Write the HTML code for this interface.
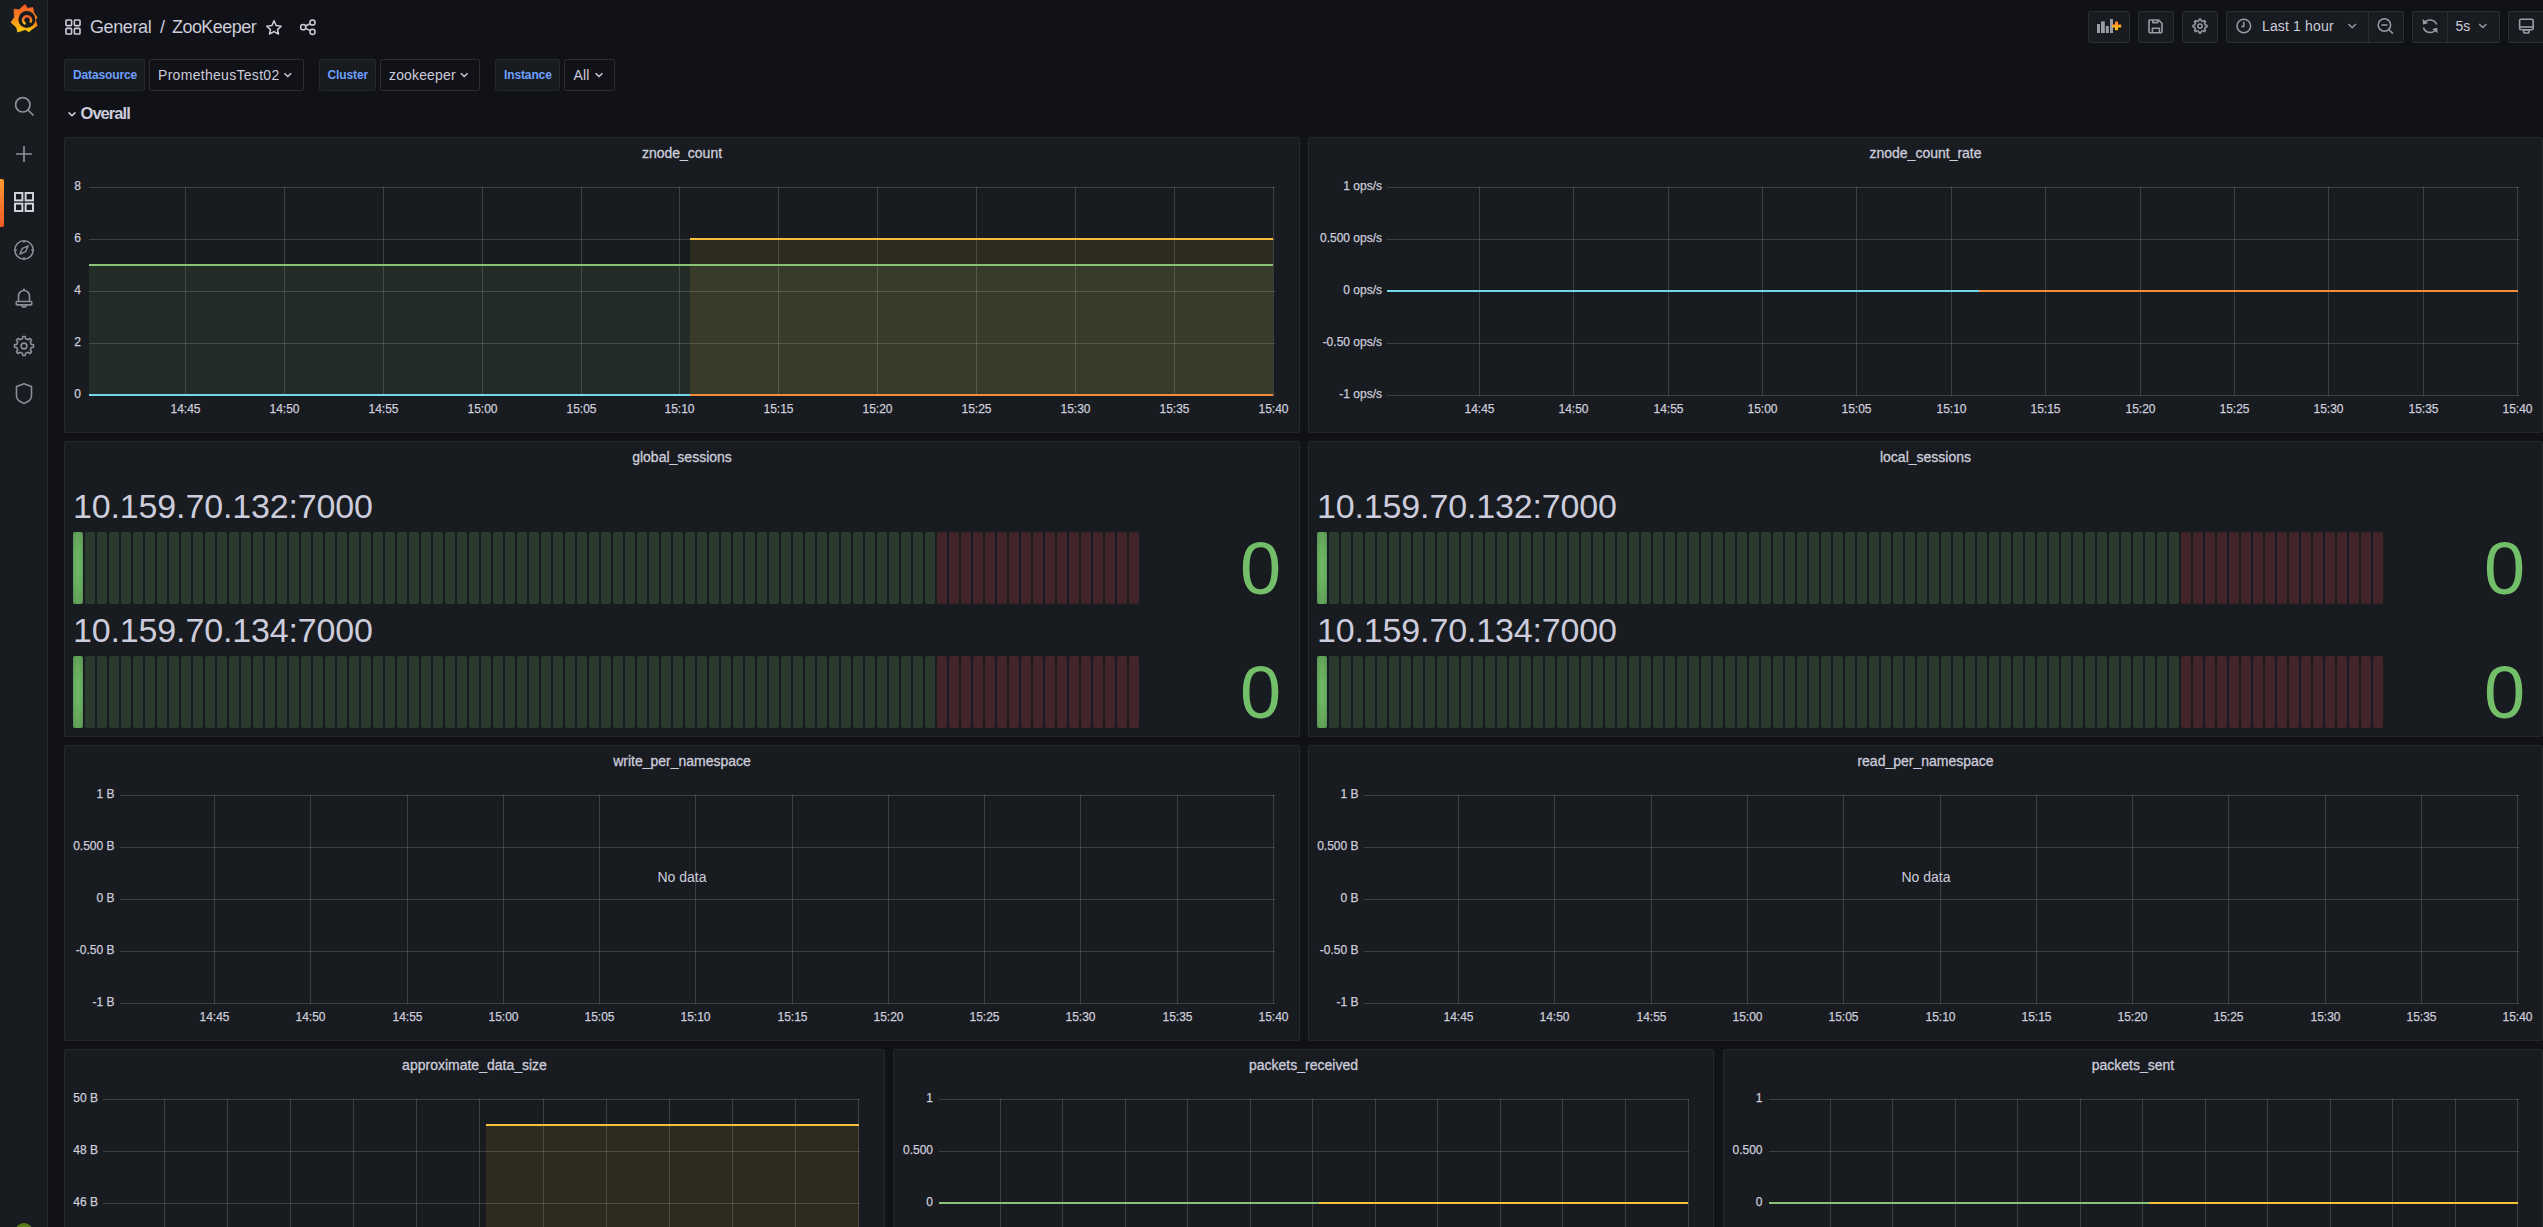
<!DOCTYPE html>
<html><head><meta charset="utf-8"><title>ZooKeeper - Grafana</title>
<style>
html,body{margin:0;padding:0;background:#111217;width:2543px;height:1227px;overflow:hidden;}
body{position:relative;font-family:"Liberation Sans", sans-serif;}
.t{position:absolute;white-space:nowrap;}
.b{position:absolute;box-sizing:border-box;}
.lit{background:radial-gradient(ellipse at center,#71bc68 0%,#66aa5e 55%,#5a9152 100%);border-radius:2px;}
svg.ov{position:absolute;left:0;top:0;}
</style></head><body>
<div class="b" style="left:0;top:0;width:48px;height:1227px;background:#181b1f;border-right:1px solid #25272c;"></div>
<div class="b" style="left:0;top:179px;width:4px;height:48px;background:linear-gradient(180deg,#ff9a2e 0%,#f05a28 100%);border-radius:0 2px 2px 0"></div>
<div class="b" style="left:64px;top:137px;width:1236px;height:296px;background:#181b1f;border:1px solid #25272c;border-radius:2px;"></div>
<div class="b" style="left:1308px;top:137px;width:1235px;height:296px;background:#181b1f;border:1px solid #25272c;border-radius:2px;"></div>
<div class="b" style="left:64px;top:441px;width:1236px;height:296px;background:#181b1f;border:1px solid #25272c;border-radius:2px;"></div>
<div class="b" style="left:1308px;top:441px;width:1235px;height:296px;background:#181b1f;border:1px solid #25272c;border-radius:2px;"></div>
<div class="b" style="left:64px;top:745px;width:1236px;height:296px;background:#181b1f;border:1px solid #25272c;border-radius:2px;"></div>
<div class="b" style="left:1308px;top:745px;width:1235px;height:296px;background:#181b1f;border:1px solid #25272c;border-radius:2px;"></div>
<div class="b" style="left:64px;top:1049px;width:821px;height:189px;background:#181b1f;border:1px solid #25272c;border-radius:2px;"></div>
<div class="b" style="left:893px;top:1049px;width:821px;height:189px;background:#181b1f;border:1px solid #25272c;border-radius:2px;"></div>
<div class="b" style="left:1723px;top:1049px;width:820px;height:189px;background:#181b1f;border:1px solid #25272c;border-radius:2px;"></div>
<div class="b lit" style="left:73px;top:532px;width:10px;height:72px"></div>
<div class="b" style="left:85px;top:532px;width:10px;height:72px;background:#293b2d;border-radius:2px"></div>
<div class="b" style="left:97px;top:532px;width:10px;height:72px;background:#293b2d;border-radius:2px"></div>
<div class="b" style="left:109px;top:532px;width:10px;height:72px;background:#293b2d;border-radius:2px"></div>
<div class="b" style="left:121px;top:532px;width:10px;height:72px;background:#293b2d;border-radius:2px"></div>
<div class="b" style="left:133px;top:532px;width:10px;height:72px;background:#293b2d;border-radius:2px"></div>
<div class="b" style="left:145px;top:532px;width:10px;height:72px;background:#293b2d;border-radius:2px"></div>
<div class="b" style="left:157px;top:532px;width:10px;height:72px;background:#293b2d;border-radius:2px"></div>
<div class="b" style="left:169px;top:532px;width:10px;height:72px;background:#293b2d;border-radius:2px"></div>
<div class="b" style="left:181px;top:532px;width:10px;height:72px;background:#293b2d;border-radius:2px"></div>
<div class="b" style="left:193px;top:532px;width:10px;height:72px;background:#293b2d;border-radius:2px"></div>
<div class="b" style="left:205px;top:532px;width:10px;height:72px;background:#293b2d;border-radius:2px"></div>
<div class="b" style="left:217px;top:532px;width:10px;height:72px;background:#293b2d;border-radius:2px"></div>
<div class="b" style="left:229px;top:532px;width:10px;height:72px;background:#293b2d;border-radius:2px"></div>
<div class="b" style="left:241px;top:532px;width:10px;height:72px;background:#293b2d;border-radius:2px"></div>
<div class="b" style="left:253px;top:532px;width:10px;height:72px;background:#293b2d;border-radius:2px"></div>
<div class="b" style="left:265px;top:532px;width:10px;height:72px;background:#293b2d;border-radius:2px"></div>
<div class="b" style="left:277px;top:532px;width:10px;height:72px;background:#293b2d;border-radius:2px"></div>
<div class="b" style="left:289px;top:532px;width:10px;height:72px;background:#293b2d;border-radius:2px"></div>
<div class="b" style="left:301px;top:532px;width:10px;height:72px;background:#293b2d;border-radius:2px"></div>
<div class="b" style="left:313px;top:532px;width:10px;height:72px;background:#293b2d;border-radius:2px"></div>
<div class="b" style="left:325px;top:532px;width:10px;height:72px;background:#293b2d;border-radius:2px"></div>
<div class="b" style="left:337px;top:532px;width:10px;height:72px;background:#293b2d;border-radius:2px"></div>
<div class="b" style="left:349px;top:532px;width:10px;height:72px;background:#293b2d;border-radius:2px"></div>
<div class="b" style="left:361px;top:532px;width:10px;height:72px;background:#293b2d;border-radius:2px"></div>
<div class="b" style="left:373px;top:532px;width:10px;height:72px;background:#293b2d;border-radius:2px"></div>
<div class="b" style="left:385px;top:532px;width:10px;height:72px;background:#293b2d;border-radius:2px"></div>
<div class="b" style="left:397px;top:532px;width:10px;height:72px;background:#293b2d;border-radius:2px"></div>
<div class="b" style="left:409px;top:532px;width:10px;height:72px;background:#293b2d;border-radius:2px"></div>
<div class="b" style="left:421px;top:532px;width:10px;height:72px;background:#293b2d;border-radius:2px"></div>
<div class="b" style="left:433px;top:532px;width:10px;height:72px;background:#293b2d;border-radius:2px"></div>
<div class="b" style="left:445px;top:532px;width:10px;height:72px;background:#293b2d;border-radius:2px"></div>
<div class="b" style="left:457px;top:532px;width:10px;height:72px;background:#293b2d;border-radius:2px"></div>
<div class="b" style="left:469px;top:532px;width:10px;height:72px;background:#293b2d;border-radius:2px"></div>
<div class="b" style="left:481px;top:532px;width:10px;height:72px;background:#293b2d;border-radius:2px"></div>
<div class="b" style="left:493px;top:532px;width:10px;height:72px;background:#293b2d;border-radius:2px"></div>
<div class="b" style="left:505px;top:532px;width:10px;height:72px;background:#293b2d;border-radius:2px"></div>
<div class="b" style="left:517px;top:532px;width:10px;height:72px;background:#293b2d;border-radius:2px"></div>
<div class="b" style="left:529px;top:532px;width:10px;height:72px;background:#293b2d;border-radius:2px"></div>
<div class="b" style="left:541px;top:532px;width:10px;height:72px;background:#293b2d;border-radius:2px"></div>
<div class="b" style="left:553px;top:532px;width:10px;height:72px;background:#293b2d;border-radius:2px"></div>
<div class="b" style="left:565px;top:532px;width:10px;height:72px;background:#293b2d;border-radius:2px"></div>
<div class="b" style="left:577px;top:532px;width:10px;height:72px;background:#293b2d;border-radius:2px"></div>
<div class="b" style="left:589px;top:532px;width:10px;height:72px;background:#293b2d;border-radius:2px"></div>
<div class="b" style="left:601px;top:532px;width:10px;height:72px;background:#293b2d;border-radius:2px"></div>
<div class="b" style="left:613px;top:532px;width:10px;height:72px;background:#293b2d;border-radius:2px"></div>
<div class="b" style="left:625px;top:532px;width:10px;height:72px;background:#293b2d;border-radius:2px"></div>
<div class="b" style="left:637px;top:532px;width:10px;height:72px;background:#293b2d;border-radius:2px"></div>
<div class="b" style="left:649px;top:532px;width:10px;height:72px;background:#293b2d;border-radius:2px"></div>
<div class="b" style="left:661px;top:532px;width:10px;height:72px;background:#293b2d;border-radius:2px"></div>
<div class="b" style="left:673px;top:532px;width:10px;height:72px;background:#293b2d;border-radius:2px"></div>
<div class="b" style="left:685px;top:532px;width:10px;height:72px;background:#293b2d;border-radius:2px"></div>
<div class="b" style="left:697px;top:532px;width:10px;height:72px;background:#293b2d;border-radius:2px"></div>
<div class="b" style="left:709px;top:532px;width:10px;height:72px;background:#293b2d;border-radius:2px"></div>
<div class="b" style="left:721px;top:532px;width:10px;height:72px;background:#293b2d;border-radius:2px"></div>
<div class="b" style="left:733px;top:532px;width:10px;height:72px;background:#293b2d;border-radius:2px"></div>
<div class="b" style="left:745px;top:532px;width:10px;height:72px;background:#293b2d;border-radius:2px"></div>
<div class="b" style="left:757px;top:532px;width:10px;height:72px;background:#293b2d;border-radius:2px"></div>
<div class="b" style="left:769px;top:532px;width:10px;height:72px;background:#293b2d;border-radius:2px"></div>
<div class="b" style="left:781px;top:532px;width:10px;height:72px;background:#293b2d;border-radius:2px"></div>
<div class="b" style="left:793px;top:532px;width:10px;height:72px;background:#293b2d;border-radius:2px"></div>
<div class="b" style="left:805px;top:532px;width:10px;height:72px;background:#293b2d;border-radius:2px"></div>
<div class="b" style="left:817px;top:532px;width:10px;height:72px;background:#293b2d;border-radius:2px"></div>
<div class="b" style="left:829px;top:532px;width:10px;height:72px;background:#293b2d;border-radius:2px"></div>
<div class="b" style="left:841px;top:532px;width:10px;height:72px;background:#293b2d;border-radius:2px"></div>
<div class="b" style="left:853px;top:532px;width:10px;height:72px;background:#293b2d;border-radius:2px"></div>
<div class="b" style="left:865px;top:532px;width:10px;height:72px;background:#293b2d;border-radius:2px"></div>
<div class="b" style="left:877px;top:532px;width:10px;height:72px;background:#293b2d;border-radius:2px"></div>
<div class="b" style="left:889px;top:532px;width:10px;height:72px;background:#293b2d;border-radius:2px"></div>
<div class="b" style="left:901px;top:532px;width:10px;height:72px;background:#293b2d;border-radius:2px"></div>
<div class="b" style="left:913px;top:532px;width:10px;height:72px;background:#293b2d;border-radius:2px"></div>
<div class="b" style="left:925px;top:532px;width:10px;height:72px;background:#293b2d;border-radius:2px"></div>
<div class="b" style="left:937px;top:532px;width:10px;height:72px;background:#44242b;border-radius:2px"></div>
<div class="b" style="left:949px;top:532px;width:10px;height:72px;background:#44242b;border-radius:2px"></div>
<div class="b" style="left:961px;top:532px;width:10px;height:72px;background:#44242b;border-radius:2px"></div>
<div class="b" style="left:973px;top:532px;width:10px;height:72px;background:#44242b;border-radius:2px"></div>
<div class="b" style="left:985px;top:532px;width:10px;height:72px;background:#44242b;border-radius:2px"></div>
<div class="b" style="left:997px;top:532px;width:10px;height:72px;background:#44242b;border-radius:2px"></div>
<div class="b" style="left:1009px;top:532px;width:10px;height:72px;background:#44242b;border-radius:2px"></div>
<div class="b" style="left:1021px;top:532px;width:10px;height:72px;background:#44242b;border-radius:2px"></div>
<div class="b" style="left:1033px;top:532px;width:10px;height:72px;background:#44242b;border-radius:2px"></div>
<div class="b" style="left:1045px;top:532px;width:10px;height:72px;background:#44242b;border-radius:2px"></div>
<div class="b" style="left:1057px;top:532px;width:10px;height:72px;background:#44242b;border-radius:2px"></div>
<div class="b" style="left:1069px;top:532px;width:10px;height:72px;background:#44242b;border-radius:2px"></div>
<div class="b" style="left:1081px;top:532px;width:10px;height:72px;background:#44242b;border-radius:2px"></div>
<div class="b" style="left:1093px;top:532px;width:10px;height:72px;background:#44242b;border-radius:2px"></div>
<div class="b" style="left:1105px;top:532px;width:10px;height:72px;background:#44242b;border-radius:2px"></div>
<div class="b" style="left:1117px;top:532px;width:10px;height:72px;background:#44242b;border-radius:2px"></div>
<div class="b" style="left:1129px;top:532px;width:10px;height:72px;background:#44242b;border-radius:2px"></div>
<div class="b lit" style="left:73px;top:656px;width:10px;height:72px"></div>
<div class="b" style="left:85px;top:656px;width:10px;height:72px;background:#293b2d;border-radius:2px"></div>
<div class="b" style="left:97px;top:656px;width:10px;height:72px;background:#293b2d;border-radius:2px"></div>
<div class="b" style="left:109px;top:656px;width:10px;height:72px;background:#293b2d;border-radius:2px"></div>
<div class="b" style="left:121px;top:656px;width:10px;height:72px;background:#293b2d;border-radius:2px"></div>
<div class="b" style="left:133px;top:656px;width:10px;height:72px;background:#293b2d;border-radius:2px"></div>
<div class="b" style="left:145px;top:656px;width:10px;height:72px;background:#293b2d;border-radius:2px"></div>
<div class="b" style="left:157px;top:656px;width:10px;height:72px;background:#293b2d;border-radius:2px"></div>
<div class="b" style="left:169px;top:656px;width:10px;height:72px;background:#293b2d;border-radius:2px"></div>
<div class="b" style="left:181px;top:656px;width:10px;height:72px;background:#293b2d;border-radius:2px"></div>
<div class="b" style="left:193px;top:656px;width:10px;height:72px;background:#293b2d;border-radius:2px"></div>
<div class="b" style="left:205px;top:656px;width:10px;height:72px;background:#293b2d;border-radius:2px"></div>
<div class="b" style="left:217px;top:656px;width:10px;height:72px;background:#293b2d;border-radius:2px"></div>
<div class="b" style="left:229px;top:656px;width:10px;height:72px;background:#293b2d;border-radius:2px"></div>
<div class="b" style="left:241px;top:656px;width:10px;height:72px;background:#293b2d;border-radius:2px"></div>
<div class="b" style="left:253px;top:656px;width:10px;height:72px;background:#293b2d;border-radius:2px"></div>
<div class="b" style="left:265px;top:656px;width:10px;height:72px;background:#293b2d;border-radius:2px"></div>
<div class="b" style="left:277px;top:656px;width:10px;height:72px;background:#293b2d;border-radius:2px"></div>
<div class="b" style="left:289px;top:656px;width:10px;height:72px;background:#293b2d;border-radius:2px"></div>
<div class="b" style="left:301px;top:656px;width:10px;height:72px;background:#293b2d;border-radius:2px"></div>
<div class="b" style="left:313px;top:656px;width:10px;height:72px;background:#293b2d;border-radius:2px"></div>
<div class="b" style="left:325px;top:656px;width:10px;height:72px;background:#293b2d;border-radius:2px"></div>
<div class="b" style="left:337px;top:656px;width:10px;height:72px;background:#293b2d;border-radius:2px"></div>
<div class="b" style="left:349px;top:656px;width:10px;height:72px;background:#293b2d;border-radius:2px"></div>
<div class="b" style="left:361px;top:656px;width:10px;height:72px;background:#293b2d;border-radius:2px"></div>
<div class="b" style="left:373px;top:656px;width:10px;height:72px;background:#293b2d;border-radius:2px"></div>
<div class="b" style="left:385px;top:656px;width:10px;height:72px;background:#293b2d;border-radius:2px"></div>
<div class="b" style="left:397px;top:656px;width:10px;height:72px;background:#293b2d;border-radius:2px"></div>
<div class="b" style="left:409px;top:656px;width:10px;height:72px;background:#293b2d;border-radius:2px"></div>
<div class="b" style="left:421px;top:656px;width:10px;height:72px;background:#293b2d;border-radius:2px"></div>
<div class="b" style="left:433px;top:656px;width:10px;height:72px;background:#293b2d;border-radius:2px"></div>
<div class="b" style="left:445px;top:656px;width:10px;height:72px;background:#293b2d;border-radius:2px"></div>
<div class="b" style="left:457px;top:656px;width:10px;height:72px;background:#293b2d;border-radius:2px"></div>
<div class="b" style="left:469px;top:656px;width:10px;height:72px;background:#293b2d;border-radius:2px"></div>
<div class="b" style="left:481px;top:656px;width:10px;height:72px;background:#293b2d;border-radius:2px"></div>
<div class="b" style="left:493px;top:656px;width:10px;height:72px;background:#293b2d;border-radius:2px"></div>
<div class="b" style="left:505px;top:656px;width:10px;height:72px;background:#293b2d;border-radius:2px"></div>
<div class="b" style="left:517px;top:656px;width:10px;height:72px;background:#293b2d;border-radius:2px"></div>
<div class="b" style="left:529px;top:656px;width:10px;height:72px;background:#293b2d;border-radius:2px"></div>
<div class="b" style="left:541px;top:656px;width:10px;height:72px;background:#293b2d;border-radius:2px"></div>
<div class="b" style="left:553px;top:656px;width:10px;height:72px;background:#293b2d;border-radius:2px"></div>
<div class="b" style="left:565px;top:656px;width:10px;height:72px;background:#293b2d;border-radius:2px"></div>
<div class="b" style="left:577px;top:656px;width:10px;height:72px;background:#293b2d;border-radius:2px"></div>
<div class="b" style="left:589px;top:656px;width:10px;height:72px;background:#293b2d;border-radius:2px"></div>
<div class="b" style="left:601px;top:656px;width:10px;height:72px;background:#293b2d;border-radius:2px"></div>
<div class="b" style="left:613px;top:656px;width:10px;height:72px;background:#293b2d;border-radius:2px"></div>
<div class="b" style="left:625px;top:656px;width:10px;height:72px;background:#293b2d;border-radius:2px"></div>
<div class="b" style="left:637px;top:656px;width:10px;height:72px;background:#293b2d;border-radius:2px"></div>
<div class="b" style="left:649px;top:656px;width:10px;height:72px;background:#293b2d;border-radius:2px"></div>
<div class="b" style="left:661px;top:656px;width:10px;height:72px;background:#293b2d;border-radius:2px"></div>
<div class="b" style="left:673px;top:656px;width:10px;height:72px;background:#293b2d;border-radius:2px"></div>
<div class="b" style="left:685px;top:656px;width:10px;height:72px;background:#293b2d;border-radius:2px"></div>
<div class="b" style="left:697px;top:656px;width:10px;height:72px;background:#293b2d;border-radius:2px"></div>
<div class="b" style="left:709px;top:656px;width:10px;height:72px;background:#293b2d;border-radius:2px"></div>
<div class="b" style="left:721px;top:656px;width:10px;height:72px;background:#293b2d;border-radius:2px"></div>
<div class="b" style="left:733px;top:656px;width:10px;height:72px;background:#293b2d;border-radius:2px"></div>
<div class="b" style="left:745px;top:656px;width:10px;height:72px;background:#293b2d;border-radius:2px"></div>
<div class="b" style="left:757px;top:656px;width:10px;height:72px;background:#293b2d;border-radius:2px"></div>
<div class="b" style="left:769px;top:656px;width:10px;height:72px;background:#293b2d;border-radius:2px"></div>
<div class="b" style="left:781px;top:656px;width:10px;height:72px;background:#293b2d;border-radius:2px"></div>
<div class="b" style="left:793px;top:656px;width:10px;height:72px;background:#293b2d;border-radius:2px"></div>
<div class="b" style="left:805px;top:656px;width:10px;height:72px;background:#293b2d;border-radius:2px"></div>
<div class="b" style="left:817px;top:656px;width:10px;height:72px;background:#293b2d;border-radius:2px"></div>
<div class="b" style="left:829px;top:656px;width:10px;height:72px;background:#293b2d;border-radius:2px"></div>
<div class="b" style="left:841px;top:656px;width:10px;height:72px;background:#293b2d;border-radius:2px"></div>
<div class="b" style="left:853px;top:656px;width:10px;height:72px;background:#293b2d;border-radius:2px"></div>
<div class="b" style="left:865px;top:656px;width:10px;height:72px;background:#293b2d;border-radius:2px"></div>
<div class="b" style="left:877px;top:656px;width:10px;height:72px;background:#293b2d;border-radius:2px"></div>
<div class="b" style="left:889px;top:656px;width:10px;height:72px;background:#293b2d;border-radius:2px"></div>
<div class="b" style="left:901px;top:656px;width:10px;height:72px;background:#293b2d;border-radius:2px"></div>
<div class="b" style="left:913px;top:656px;width:10px;height:72px;background:#293b2d;border-radius:2px"></div>
<div class="b" style="left:925px;top:656px;width:10px;height:72px;background:#293b2d;border-radius:2px"></div>
<div class="b" style="left:937px;top:656px;width:10px;height:72px;background:#44242b;border-radius:2px"></div>
<div class="b" style="left:949px;top:656px;width:10px;height:72px;background:#44242b;border-radius:2px"></div>
<div class="b" style="left:961px;top:656px;width:10px;height:72px;background:#44242b;border-radius:2px"></div>
<div class="b" style="left:973px;top:656px;width:10px;height:72px;background:#44242b;border-radius:2px"></div>
<div class="b" style="left:985px;top:656px;width:10px;height:72px;background:#44242b;border-radius:2px"></div>
<div class="b" style="left:997px;top:656px;width:10px;height:72px;background:#44242b;border-radius:2px"></div>
<div class="b" style="left:1009px;top:656px;width:10px;height:72px;background:#44242b;border-radius:2px"></div>
<div class="b" style="left:1021px;top:656px;width:10px;height:72px;background:#44242b;border-radius:2px"></div>
<div class="b" style="left:1033px;top:656px;width:10px;height:72px;background:#44242b;border-radius:2px"></div>
<div class="b" style="left:1045px;top:656px;width:10px;height:72px;background:#44242b;border-radius:2px"></div>
<div class="b" style="left:1057px;top:656px;width:10px;height:72px;background:#44242b;border-radius:2px"></div>
<div class="b" style="left:1069px;top:656px;width:10px;height:72px;background:#44242b;border-radius:2px"></div>
<div class="b" style="left:1081px;top:656px;width:10px;height:72px;background:#44242b;border-radius:2px"></div>
<div class="b" style="left:1093px;top:656px;width:10px;height:72px;background:#44242b;border-radius:2px"></div>
<div class="b" style="left:1105px;top:656px;width:10px;height:72px;background:#44242b;border-radius:2px"></div>
<div class="b" style="left:1117px;top:656px;width:10px;height:72px;background:#44242b;border-radius:2px"></div>
<div class="b" style="left:1129px;top:656px;width:10px;height:72px;background:#44242b;border-radius:2px"></div>
<div class="b lit" style="left:1317px;top:532px;width:10px;height:72px"></div>
<div class="b" style="left:1329px;top:532px;width:10px;height:72px;background:#293b2d;border-radius:2px"></div>
<div class="b" style="left:1341px;top:532px;width:10px;height:72px;background:#293b2d;border-radius:2px"></div>
<div class="b" style="left:1353px;top:532px;width:10px;height:72px;background:#293b2d;border-radius:2px"></div>
<div class="b" style="left:1365px;top:532px;width:10px;height:72px;background:#293b2d;border-radius:2px"></div>
<div class="b" style="left:1377px;top:532px;width:10px;height:72px;background:#293b2d;border-radius:2px"></div>
<div class="b" style="left:1389px;top:532px;width:10px;height:72px;background:#293b2d;border-radius:2px"></div>
<div class="b" style="left:1401px;top:532px;width:10px;height:72px;background:#293b2d;border-radius:2px"></div>
<div class="b" style="left:1413px;top:532px;width:10px;height:72px;background:#293b2d;border-radius:2px"></div>
<div class="b" style="left:1425px;top:532px;width:10px;height:72px;background:#293b2d;border-radius:2px"></div>
<div class="b" style="left:1437px;top:532px;width:10px;height:72px;background:#293b2d;border-radius:2px"></div>
<div class="b" style="left:1449px;top:532px;width:10px;height:72px;background:#293b2d;border-radius:2px"></div>
<div class="b" style="left:1461px;top:532px;width:10px;height:72px;background:#293b2d;border-radius:2px"></div>
<div class="b" style="left:1473px;top:532px;width:10px;height:72px;background:#293b2d;border-radius:2px"></div>
<div class="b" style="left:1485px;top:532px;width:10px;height:72px;background:#293b2d;border-radius:2px"></div>
<div class="b" style="left:1497px;top:532px;width:10px;height:72px;background:#293b2d;border-radius:2px"></div>
<div class="b" style="left:1509px;top:532px;width:10px;height:72px;background:#293b2d;border-radius:2px"></div>
<div class="b" style="left:1521px;top:532px;width:10px;height:72px;background:#293b2d;border-radius:2px"></div>
<div class="b" style="left:1533px;top:532px;width:10px;height:72px;background:#293b2d;border-radius:2px"></div>
<div class="b" style="left:1545px;top:532px;width:10px;height:72px;background:#293b2d;border-radius:2px"></div>
<div class="b" style="left:1557px;top:532px;width:10px;height:72px;background:#293b2d;border-radius:2px"></div>
<div class="b" style="left:1569px;top:532px;width:10px;height:72px;background:#293b2d;border-radius:2px"></div>
<div class="b" style="left:1581px;top:532px;width:10px;height:72px;background:#293b2d;border-radius:2px"></div>
<div class="b" style="left:1593px;top:532px;width:10px;height:72px;background:#293b2d;border-radius:2px"></div>
<div class="b" style="left:1605px;top:532px;width:10px;height:72px;background:#293b2d;border-radius:2px"></div>
<div class="b" style="left:1617px;top:532px;width:10px;height:72px;background:#293b2d;border-radius:2px"></div>
<div class="b" style="left:1629px;top:532px;width:10px;height:72px;background:#293b2d;border-radius:2px"></div>
<div class="b" style="left:1641px;top:532px;width:10px;height:72px;background:#293b2d;border-radius:2px"></div>
<div class="b" style="left:1653px;top:532px;width:10px;height:72px;background:#293b2d;border-radius:2px"></div>
<div class="b" style="left:1665px;top:532px;width:10px;height:72px;background:#293b2d;border-radius:2px"></div>
<div class="b" style="left:1677px;top:532px;width:10px;height:72px;background:#293b2d;border-radius:2px"></div>
<div class="b" style="left:1689px;top:532px;width:10px;height:72px;background:#293b2d;border-radius:2px"></div>
<div class="b" style="left:1701px;top:532px;width:10px;height:72px;background:#293b2d;border-radius:2px"></div>
<div class="b" style="left:1713px;top:532px;width:10px;height:72px;background:#293b2d;border-radius:2px"></div>
<div class="b" style="left:1725px;top:532px;width:10px;height:72px;background:#293b2d;border-radius:2px"></div>
<div class="b" style="left:1737px;top:532px;width:10px;height:72px;background:#293b2d;border-radius:2px"></div>
<div class="b" style="left:1749px;top:532px;width:10px;height:72px;background:#293b2d;border-radius:2px"></div>
<div class="b" style="left:1761px;top:532px;width:10px;height:72px;background:#293b2d;border-radius:2px"></div>
<div class="b" style="left:1773px;top:532px;width:10px;height:72px;background:#293b2d;border-radius:2px"></div>
<div class="b" style="left:1785px;top:532px;width:10px;height:72px;background:#293b2d;border-radius:2px"></div>
<div class="b" style="left:1797px;top:532px;width:10px;height:72px;background:#293b2d;border-radius:2px"></div>
<div class="b" style="left:1809px;top:532px;width:10px;height:72px;background:#293b2d;border-radius:2px"></div>
<div class="b" style="left:1821px;top:532px;width:10px;height:72px;background:#293b2d;border-radius:2px"></div>
<div class="b" style="left:1833px;top:532px;width:10px;height:72px;background:#293b2d;border-radius:2px"></div>
<div class="b" style="left:1845px;top:532px;width:10px;height:72px;background:#293b2d;border-radius:2px"></div>
<div class="b" style="left:1857px;top:532px;width:10px;height:72px;background:#293b2d;border-radius:2px"></div>
<div class="b" style="left:1869px;top:532px;width:10px;height:72px;background:#293b2d;border-radius:2px"></div>
<div class="b" style="left:1881px;top:532px;width:10px;height:72px;background:#293b2d;border-radius:2px"></div>
<div class="b" style="left:1893px;top:532px;width:10px;height:72px;background:#293b2d;border-radius:2px"></div>
<div class="b" style="left:1905px;top:532px;width:10px;height:72px;background:#293b2d;border-radius:2px"></div>
<div class="b" style="left:1917px;top:532px;width:10px;height:72px;background:#293b2d;border-radius:2px"></div>
<div class="b" style="left:1929px;top:532px;width:10px;height:72px;background:#293b2d;border-radius:2px"></div>
<div class="b" style="left:1941px;top:532px;width:10px;height:72px;background:#293b2d;border-radius:2px"></div>
<div class="b" style="left:1953px;top:532px;width:10px;height:72px;background:#293b2d;border-radius:2px"></div>
<div class="b" style="left:1965px;top:532px;width:10px;height:72px;background:#293b2d;border-radius:2px"></div>
<div class="b" style="left:1977px;top:532px;width:10px;height:72px;background:#293b2d;border-radius:2px"></div>
<div class="b" style="left:1989px;top:532px;width:10px;height:72px;background:#293b2d;border-radius:2px"></div>
<div class="b" style="left:2001px;top:532px;width:10px;height:72px;background:#293b2d;border-radius:2px"></div>
<div class="b" style="left:2013px;top:532px;width:10px;height:72px;background:#293b2d;border-radius:2px"></div>
<div class="b" style="left:2025px;top:532px;width:10px;height:72px;background:#293b2d;border-radius:2px"></div>
<div class="b" style="left:2037px;top:532px;width:10px;height:72px;background:#293b2d;border-radius:2px"></div>
<div class="b" style="left:2049px;top:532px;width:10px;height:72px;background:#293b2d;border-radius:2px"></div>
<div class="b" style="left:2061px;top:532px;width:10px;height:72px;background:#293b2d;border-radius:2px"></div>
<div class="b" style="left:2073px;top:532px;width:10px;height:72px;background:#293b2d;border-radius:2px"></div>
<div class="b" style="left:2085px;top:532px;width:10px;height:72px;background:#293b2d;border-radius:2px"></div>
<div class="b" style="left:2097px;top:532px;width:10px;height:72px;background:#293b2d;border-radius:2px"></div>
<div class="b" style="left:2109px;top:532px;width:10px;height:72px;background:#293b2d;border-radius:2px"></div>
<div class="b" style="left:2121px;top:532px;width:10px;height:72px;background:#293b2d;border-radius:2px"></div>
<div class="b" style="left:2133px;top:532px;width:10px;height:72px;background:#293b2d;border-radius:2px"></div>
<div class="b" style="left:2145px;top:532px;width:10px;height:72px;background:#293b2d;border-radius:2px"></div>
<div class="b" style="left:2157px;top:532px;width:10px;height:72px;background:#293b2d;border-radius:2px"></div>
<div class="b" style="left:2169px;top:532px;width:10px;height:72px;background:#293b2d;border-radius:2px"></div>
<div class="b" style="left:2181px;top:532px;width:10px;height:72px;background:#44242b;border-radius:2px"></div>
<div class="b" style="left:2193px;top:532px;width:10px;height:72px;background:#44242b;border-radius:2px"></div>
<div class="b" style="left:2205px;top:532px;width:10px;height:72px;background:#44242b;border-radius:2px"></div>
<div class="b" style="left:2217px;top:532px;width:10px;height:72px;background:#44242b;border-radius:2px"></div>
<div class="b" style="left:2229px;top:532px;width:10px;height:72px;background:#44242b;border-radius:2px"></div>
<div class="b" style="left:2241px;top:532px;width:10px;height:72px;background:#44242b;border-radius:2px"></div>
<div class="b" style="left:2253px;top:532px;width:10px;height:72px;background:#44242b;border-radius:2px"></div>
<div class="b" style="left:2265px;top:532px;width:10px;height:72px;background:#44242b;border-radius:2px"></div>
<div class="b" style="left:2277px;top:532px;width:10px;height:72px;background:#44242b;border-radius:2px"></div>
<div class="b" style="left:2289px;top:532px;width:10px;height:72px;background:#44242b;border-radius:2px"></div>
<div class="b" style="left:2301px;top:532px;width:10px;height:72px;background:#44242b;border-radius:2px"></div>
<div class="b" style="left:2313px;top:532px;width:10px;height:72px;background:#44242b;border-radius:2px"></div>
<div class="b" style="left:2325px;top:532px;width:10px;height:72px;background:#44242b;border-radius:2px"></div>
<div class="b" style="left:2337px;top:532px;width:10px;height:72px;background:#44242b;border-radius:2px"></div>
<div class="b" style="left:2349px;top:532px;width:10px;height:72px;background:#44242b;border-radius:2px"></div>
<div class="b" style="left:2361px;top:532px;width:10px;height:72px;background:#44242b;border-radius:2px"></div>
<div class="b" style="left:2373px;top:532px;width:10px;height:72px;background:#44242b;border-radius:2px"></div>
<div class="b lit" style="left:1317px;top:656px;width:10px;height:72px"></div>
<div class="b" style="left:1329px;top:656px;width:10px;height:72px;background:#293b2d;border-radius:2px"></div>
<div class="b" style="left:1341px;top:656px;width:10px;height:72px;background:#293b2d;border-radius:2px"></div>
<div class="b" style="left:1353px;top:656px;width:10px;height:72px;background:#293b2d;border-radius:2px"></div>
<div class="b" style="left:1365px;top:656px;width:10px;height:72px;background:#293b2d;border-radius:2px"></div>
<div class="b" style="left:1377px;top:656px;width:10px;height:72px;background:#293b2d;border-radius:2px"></div>
<div class="b" style="left:1389px;top:656px;width:10px;height:72px;background:#293b2d;border-radius:2px"></div>
<div class="b" style="left:1401px;top:656px;width:10px;height:72px;background:#293b2d;border-radius:2px"></div>
<div class="b" style="left:1413px;top:656px;width:10px;height:72px;background:#293b2d;border-radius:2px"></div>
<div class="b" style="left:1425px;top:656px;width:10px;height:72px;background:#293b2d;border-radius:2px"></div>
<div class="b" style="left:1437px;top:656px;width:10px;height:72px;background:#293b2d;border-radius:2px"></div>
<div class="b" style="left:1449px;top:656px;width:10px;height:72px;background:#293b2d;border-radius:2px"></div>
<div class="b" style="left:1461px;top:656px;width:10px;height:72px;background:#293b2d;border-radius:2px"></div>
<div class="b" style="left:1473px;top:656px;width:10px;height:72px;background:#293b2d;border-radius:2px"></div>
<div class="b" style="left:1485px;top:656px;width:10px;height:72px;background:#293b2d;border-radius:2px"></div>
<div class="b" style="left:1497px;top:656px;width:10px;height:72px;background:#293b2d;border-radius:2px"></div>
<div class="b" style="left:1509px;top:656px;width:10px;height:72px;background:#293b2d;border-radius:2px"></div>
<div class="b" style="left:1521px;top:656px;width:10px;height:72px;background:#293b2d;border-radius:2px"></div>
<div class="b" style="left:1533px;top:656px;width:10px;height:72px;background:#293b2d;border-radius:2px"></div>
<div class="b" style="left:1545px;top:656px;width:10px;height:72px;background:#293b2d;border-radius:2px"></div>
<div class="b" style="left:1557px;top:656px;width:10px;height:72px;background:#293b2d;border-radius:2px"></div>
<div class="b" style="left:1569px;top:656px;width:10px;height:72px;background:#293b2d;border-radius:2px"></div>
<div class="b" style="left:1581px;top:656px;width:10px;height:72px;background:#293b2d;border-radius:2px"></div>
<div class="b" style="left:1593px;top:656px;width:10px;height:72px;background:#293b2d;border-radius:2px"></div>
<div class="b" style="left:1605px;top:656px;width:10px;height:72px;background:#293b2d;border-radius:2px"></div>
<div class="b" style="left:1617px;top:656px;width:10px;height:72px;background:#293b2d;border-radius:2px"></div>
<div class="b" style="left:1629px;top:656px;width:10px;height:72px;background:#293b2d;border-radius:2px"></div>
<div class="b" style="left:1641px;top:656px;width:10px;height:72px;background:#293b2d;border-radius:2px"></div>
<div class="b" style="left:1653px;top:656px;width:10px;height:72px;background:#293b2d;border-radius:2px"></div>
<div class="b" style="left:1665px;top:656px;width:10px;height:72px;background:#293b2d;border-radius:2px"></div>
<div class="b" style="left:1677px;top:656px;width:10px;height:72px;background:#293b2d;border-radius:2px"></div>
<div class="b" style="left:1689px;top:656px;width:10px;height:72px;background:#293b2d;border-radius:2px"></div>
<div class="b" style="left:1701px;top:656px;width:10px;height:72px;background:#293b2d;border-radius:2px"></div>
<div class="b" style="left:1713px;top:656px;width:10px;height:72px;background:#293b2d;border-radius:2px"></div>
<div class="b" style="left:1725px;top:656px;width:10px;height:72px;background:#293b2d;border-radius:2px"></div>
<div class="b" style="left:1737px;top:656px;width:10px;height:72px;background:#293b2d;border-radius:2px"></div>
<div class="b" style="left:1749px;top:656px;width:10px;height:72px;background:#293b2d;border-radius:2px"></div>
<div class="b" style="left:1761px;top:656px;width:10px;height:72px;background:#293b2d;border-radius:2px"></div>
<div class="b" style="left:1773px;top:656px;width:10px;height:72px;background:#293b2d;border-radius:2px"></div>
<div class="b" style="left:1785px;top:656px;width:10px;height:72px;background:#293b2d;border-radius:2px"></div>
<div class="b" style="left:1797px;top:656px;width:10px;height:72px;background:#293b2d;border-radius:2px"></div>
<div class="b" style="left:1809px;top:656px;width:10px;height:72px;background:#293b2d;border-radius:2px"></div>
<div class="b" style="left:1821px;top:656px;width:10px;height:72px;background:#293b2d;border-radius:2px"></div>
<div class="b" style="left:1833px;top:656px;width:10px;height:72px;background:#293b2d;border-radius:2px"></div>
<div class="b" style="left:1845px;top:656px;width:10px;height:72px;background:#293b2d;border-radius:2px"></div>
<div class="b" style="left:1857px;top:656px;width:10px;height:72px;background:#293b2d;border-radius:2px"></div>
<div class="b" style="left:1869px;top:656px;width:10px;height:72px;background:#293b2d;border-radius:2px"></div>
<div class="b" style="left:1881px;top:656px;width:10px;height:72px;background:#293b2d;border-radius:2px"></div>
<div class="b" style="left:1893px;top:656px;width:10px;height:72px;background:#293b2d;border-radius:2px"></div>
<div class="b" style="left:1905px;top:656px;width:10px;height:72px;background:#293b2d;border-radius:2px"></div>
<div class="b" style="left:1917px;top:656px;width:10px;height:72px;background:#293b2d;border-radius:2px"></div>
<div class="b" style="left:1929px;top:656px;width:10px;height:72px;background:#293b2d;border-radius:2px"></div>
<div class="b" style="left:1941px;top:656px;width:10px;height:72px;background:#293b2d;border-radius:2px"></div>
<div class="b" style="left:1953px;top:656px;width:10px;height:72px;background:#293b2d;border-radius:2px"></div>
<div class="b" style="left:1965px;top:656px;width:10px;height:72px;background:#293b2d;border-radius:2px"></div>
<div class="b" style="left:1977px;top:656px;width:10px;height:72px;background:#293b2d;border-radius:2px"></div>
<div class="b" style="left:1989px;top:656px;width:10px;height:72px;background:#293b2d;border-radius:2px"></div>
<div class="b" style="left:2001px;top:656px;width:10px;height:72px;background:#293b2d;border-radius:2px"></div>
<div class="b" style="left:2013px;top:656px;width:10px;height:72px;background:#293b2d;border-radius:2px"></div>
<div class="b" style="left:2025px;top:656px;width:10px;height:72px;background:#293b2d;border-radius:2px"></div>
<div class="b" style="left:2037px;top:656px;width:10px;height:72px;background:#293b2d;border-radius:2px"></div>
<div class="b" style="left:2049px;top:656px;width:10px;height:72px;background:#293b2d;border-radius:2px"></div>
<div class="b" style="left:2061px;top:656px;width:10px;height:72px;background:#293b2d;border-radius:2px"></div>
<div class="b" style="left:2073px;top:656px;width:10px;height:72px;background:#293b2d;border-radius:2px"></div>
<div class="b" style="left:2085px;top:656px;width:10px;height:72px;background:#293b2d;border-radius:2px"></div>
<div class="b" style="left:2097px;top:656px;width:10px;height:72px;background:#293b2d;border-radius:2px"></div>
<div class="b" style="left:2109px;top:656px;width:10px;height:72px;background:#293b2d;border-radius:2px"></div>
<div class="b" style="left:2121px;top:656px;width:10px;height:72px;background:#293b2d;border-radius:2px"></div>
<div class="b" style="left:2133px;top:656px;width:10px;height:72px;background:#293b2d;border-radius:2px"></div>
<div class="b" style="left:2145px;top:656px;width:10px;height:72px;background:#293b2d;border-radius:2px"></div>
<div class="b" style="left:2157px;top:656px;width:10px;height:72px;background:#293b2d;border-radius:2px"></div>
<div class="b" style="left:2169px;top:656px;width:10px;height:72px;background:#293b2d;border-radius:2px"></div>
<div class="b" style="left:2181px;top:656px;width:10px;height:72px;background:#44242b;border-radius:2px"></div>
<div class="b" style="left:2193px;top:656px;width:10px;height:72px;background:#44242b;border-radius:2px"></div>
<div class="b" style="left:2205px;top:656px;width:10px;height:72px;background:#44242b;border-radius:2px"></div>
<div class="b" style="left:2217px;top:656px;width:10px;height:72px;background:#44242b;border-radius:2px"></div>
<div class="b" style="left:2229px;top:656px;width:10px;height:72px;background:#44242b;border-radius:2px"></div>
<div class="b" style="left:2241px;top:656px;width:10px;height:72px;background:#44242b;border-radius:2px"></div>
<div class="b" style="left:2253px;top:656px;width:10px;height:72px;background:#44242b;border-radius:2px"></div>
<div class="b" style="left:2265px;top:656px;width:10px;height:72px;background:#44242b;border-radius:2px"></div>
<div class="b" style="left:2277px;top:656px;width:10px;height:72px;background:#44242b;border-radius:2px"></div>
<div class="b" style="left:2289px;top:656px;width:10px;height:72px;background:#44242b;border-radius:2px"></div>
<div class="b" style="left:2301px;top:656px;width:10px;height:72px;background:#44242b;border-radius:2px"></div>
<div class="b" style="left:2313px;top:656px;width:10px;height:72px;background:#44242b;border-radius:2px"></div>
<div class="b" style="left:2325px;top:656px;width:10px;height:72px;background:#44242b;border-radius:2px"></div>
<div class="b" style="left:2337px;top:656px;width:10px;height:72px;background:#44242b;border-radius:2px"></div>
<div class="b" style="left:2349px;top:656px;width:10px;height:72px;background:#44242b;border-radius:2px"></div>
<div class="b" style="left:2361px;top:656px;width:10px;height:72px;background:#44242b;border-radius:2px"></div>
<div class="b" style="left:2373px;top:656px;width:10px;height:72px;background:#44242b;border-radius:2px"></div>
<div class="b" style="left:64px;top:59px;width:81px;height:32px;background:#181b1f;border:1px solid #25272c;border-radius:2px;"></div>
<div class="b" style="left:149px;top:59px;width:155px;height:32px;background:#111217;border:1px solid #2b2d32;border-radius:2px;"></div>
<div class="b" style="left:319px;top:59px;width:57px;height:32px;background:#181b1f;border:1px solid #25272c;border-radius:2px;"></div>
<div class="b" style="left:380px;top:59px;width:100px;height:32px;background:#111217;border:1px solid #2b2d32;border-radius:2px;"></div>
<div class="b" style="left:495px;top:59px;width:65px;height:32px;background:#181b1f;border:1px solid #25272c;border-radius:2px;"></div>
<div class="b" style="left:564px;top:59px;width:51px;height:32px;background:#111217;border:1px solid #2b2d32;border-radius:2px;"></div>
<div class="b" style="left:2088px;top:11px;width:42px;height:32px;background:#181b1f;border:1px solid #2b2d32;border-radius:2px;"></div>
<div class="b" style="left:2138px;top:11px;width:36px;height:32px;background:#181b1f;border:1px solid #2b2d32;border-radius:2px;"></div>
<div class="b" style="left:2182px;top:11px;width:36px;height:32px;background:#181b1f;border:1px solid #2b2d32;border-radius:2px;"></div>
<div class="b" style="left:2226px;top:11px;width:178px;height:32px;background:#181b1f;border:1px solid #2b2d32;border-radius:2px;"></div>
<div class="b" style="left:2368px;top:12px;width:1px;height:31px;background:#2b2d32"></div>
<div class="b" style="left:2412px;top:11px;width:88px;height:32px;background:#181b1f;border:1px solid #2b2d32;border-radius:2px;"></div>
<div class="b" style="left:2447px;top:12px;width:1px;height:31px;background:#2b2d32"></div>
<div class="b" style="left:2508px;top:11px;width:53px;height:32px;background:#181b1f;border:1px solid #2b2d32;border-radius:2px;"></div>
<svg class="ov" width="2543" height="1227" viewBox="0 0 2543 1227" shape-rendering="auto">
<rect x="89" y="187" width="1186" height="1" fill="rgba(204,204,220,0.2)"/>
<rect x="89" y="239" width="1186" height="1" fill="rgba(204,204,220,0.2)"/>
<rect x="89" y="291" width="1186" height="1" fill="rgba(204,204,220,0.2)"/>
<rect x="89" y="343" width="1186" height="1" fill="rgba(204,204,220,0.2)"/>
<rect x="89" y="395" width="1186" height="1" fill="rgba(204,204,220,0.2)"/>
<rect x="185" y="187" width="1" height="209" fill="rgba(204,204,220,0.2)"/>
<rect x="284" y="187" width="1" height="209" fill="rgba(204,204,220,0.2)"/>
<rect x="383" y="187" width="1" height="209" fill="rgba(204,204,220,0.2)"/>
<rect x="482" y="187" width="1" height="209" fill="rgba(204,204,220,0.2)"/>
<rect x="581" y="187" width="1" height="209" fill="rgba(204,204,220,0.2)"/>
<rect x="679" y="187" width="1" height="209" fill="rgba(204,204,220,0.2)"/>
<rect x="778" y="187" width="1" height="209" fill="rgba(204,204,220,0.2)"/>
<rect x="877" y="187" width="1" height="209" fill="rgba(204,204,220,0.2)"/>
<rect x="976" y="187" width="1" height="209" fill="rgba(204,204,220,0.2)"/>
<rect x="1075" y="187" width="1" height="209" fill="rgba(204,204,220,0.2)"/>
<rect x="1174" y="187" width="1" height="209" fill="rgba(204,204,220,0.2)"/>
<rect x="1273" y="187" width="1" height="209" fill="rgba(204,204,220,0.2)"/>
<rect x="89" y="265" width="1184" height="130" fill="#8ac376" fill-opacity="0.1"/>
<rect x="690" y="239" width="583" height="156" fill="#f6c03b" fill-opacity="0.1"/>
<rect x="89" y="394" width="601" height="2" fill="#70d7ec"/>
<rect x="690" y="394" width="583" height="2" fill="#f58c3b"/>
<rect x="89" y="264" width="1184" height="2" fill="#8ac376"/>
<rect x="690" y="238" width="583" height="2" fill="#f6c03b"/>
<rect x="1387" y="187" width="1132" height="1" fill="rgba(204,204,220,0.2)"/>
<rect x="1387" y="239" width="1132" height="1" fill="rgba(204,204,220,0.2)"/>
<rect x="1387" y="291" width="1132" height="1" fill="rgba(204,204,220,0.2)"/>
<rect x="1387" y="343" width="1132" height="1" fill="rgba(204,204,220,0.2)"/>
<rect x="1387" y="395" width="1132" height="1" fill="rgba(204,204,220,0.2)"/>
<rect x="1479" y="187" width="1" height="209" fill="rgba(204,204,220,0.2)"/>
<rect x="1573" y="187" width="1" height="209" fill="rgba(204,204,220,0.2)"/>
<rect x="1668" y="187" width="1" height="209" fill="rgba(204,204,220,0.2)"/>
<rect x="1762" y="187" width="1" height="209" fill="rgba(204,204,220,0.2)"/>
<rect x="1856" y="187" width="1" height="209" fill="rgba(204,204,220,0.2)"/>
<rect x="1951" y="187" width="1" height="209" fill="rgba(204,204,220,0.2)"/>
<rect x="2045" y="187" width="1" height="209" fill="rgba(204,204,220,0.2)"/>
<rect x="2140" y="187" width="1" height="209" fill="rgba(204,204,220,0.2)"/>
<rect x="2234" y="187" width="1" height="209" fill="rgba(204,204,220,0.2)"/>
<rect x="2328" y="187" width="1" height="209" fill="rgba(204,204,220,0.2)"/>
<rect x="2423" y="187" width="1" height="209" fill="rgba(204,204,220,0.2)"/>
<rect x="2517" y="187" width="1" height="209" fill="rgba(204,204,220,0.2)"/>
<rect x="1387" y="290" width="592" height="2" fill="#70d7ec"/>
<rect x="1979" y="290" width="539" height="2" fill="#f58c3b"/>
<rect x="120" y="795" width="1155" height="1" fill="rgba(204,204,220,0.2)"/>
<rect x="120" y="847" width="1155" height="1" fill="rgba(204,204,220,0.2)"/>
<rect x="120" y="899" width="1155" height="1" fill="rgba(204,204,220,0.2)"/>
<rect x="120" y="951" width="1155" height="1" fill="rgba(204,204,220,0.2)"/>
<rect x="120" y="1003" width="1155" height="1" fill="rgba(204,204,220,0.2)"/>
<rect x="214" y="795" width="1" height="209" fill="rgba(204,204,220,0.2)"/>
<rect x="310" y="795" width="1" height="209" fill="rgba(204,204,220,0.2)"/>
<rect x="407" y="795" width="1" height="209" fill="rgba(204,204,220,0.2)"/>
<rect x="503" y="795" width="1" height="209" fill="rgba(204,204,220,0.2)"/>
<rect x="599" y="795" width="1" height="209" fill="rgba(204,204,220,0.2)"/>
<rect x="695" y="795" width="1" height="209" fill="rgba(204,204,220,0.2)"/>
<rect x="792" y="795" width="1" height="209" fill="rgba(204,204,220,0.2)"/>
<rect x="888" y="795" width="1" height="209" fill="rgba(204,204,220,0.2)"/>
<rect x="984" y="795" width="1" height="209" fill="rgba(204,204,220,0.2)"/>
<rect x="1080" y="795" width="1" height="209" fill="rgba(204,204,220,0.2)"/>
<rect x="1177" y="795" width="1" height="209" fill="rgba(204,204,220,0.2)"/>
<rect x="1273" y="795" width="1" height="209" fill="rgba(204,204,220,0.2)"/>
<rect x="1364" y="795" width="1155" height="1" fill="rgba(204,204,220,0.2)"/>
<rect x="1364" y="847" width="1155" height="1" fill="rgba(204,204,220,0.2)"/>
<rect x="1364" y="899" width="1155" height="1" fill="rgba(204,204,220,0.2)"/>
<rect x="1364" y="951" width="1155" height="1" fill="rgba(204,204,220,0.2)"/>
<rect x="1364" y="1003" width="1155" height="1" fill="rgba(204,204,220,0.2)"/>
<rect x="1458" y="795" width="1" height="209" fill="rgba(204,204,220,0.2)"/>
<rect x="1554" y="795" width="1" height="209" fill="rgba(204,204,220,0.2)"/>
<rect x="1651" y="795" width="1" height="209" fill="rgba(204,204,220,0.2)"/>
<rect x="1747" y="795" width="1" height="209" fill="rgba(204,204,220,0.2)"/>
<rect x="1843" y="795" width="1" height="209" fill="rgba(204,204,220,0.2)"/>
<rect x="1940" y="795" width="1" height="209" fill="rgba(204,204,220,0.2)"/>
<rect x="2036" y="795" width="1" height="209" fill="rgba(204,204,220,0.2)"/>
<rect x="2132" y="795" width="1" height="209" fill="rgba(204,204,220,0.2)"/>
<rect x="2228" y="795" width="1" height="209" fill="rgba(204,204,220,0.2)"/>
<rect x="2325" y="795" width="1" height="209" fill="rgba(204,204,220,0.2)"/>
<rect x="2421" y="795" width="1" height="209" fill="rgba(204,204,220,0.2)"/>
<rect x="2517" y="795" width="1" height="209" fill="rgba(204,204,220,0.2)"/>
<rect x="103" y="1099" width="757" height="1" fill="rgba(204,204,220,0.2)"/>
<rect x="103" y="1151" width="757" height="1" fill="rgba(204,204,220,0.2)"/>
<rect x="103" y="1203" width="757" height="1" fill="rgba(204,204,220,0.2)"/>
<rect x="103" y="1255" width="757" height="1" fill="rgba(204,204,220,0.2)"/>
<rect x="164" y="1099" width="1" height="157" fill="rgba(204,204,220,0.2)"/>
<rect x="227" y="1099" width="1" height="157" fill="rgba(204,204,220,0.2)"/>
<rect x="290" y="1099" width="1" height="157" fill="rgba(204,204,220,0.2)"/>
<rect x="353" y="1099" width="1" height="157" fill="rgba(204,204,220,0.2)"/>
<rect x="416" y="1099" width="1" height="157" fill="rgba(204,204,220,0.2)"/>
<rect x="479" y="1099" width="1" height="157" fill="rgba(204,204,220,0.2)"/>
<rect x="543" y="1099" width="1" height="157" fill="rgba(204,204,220,0.2)"/>
<rect x="606" y="1099" width="1" height="157" fill="rgba(204,204,220,0.2)"/>
<rect x="669" y="1099" width="1" height="157" fill="rgba(204,204,220,0.2)"/>
<rect x="732" y="1099" width="1" height="157" fill="rgba(204,204,220,0.2)"/>
<rect x="795" y="1099" width="1" height="157" fill="rgba(204,204,220,0.2)"/>
<rect x="858" y="1099" width="1" height="157" fill="rgba(204,204,220,0.2)"/>
<rect x="486" y="1125" width="373" height="135" fill="#f6c03b" fill-opacity="0.1"/>
<rect x="486" y="1124" width="373" height="2" fill="#f6c03b"/>
<rect x="939" y="1099" width="750" height="1" fill="rgba(204,204,220,0.2)"/>
<rect x="939" y="1151" width="750" height="1" fill="rgba(204,204,220,0.2)"/>
<rect x="939" y="1203" width="750" height="1" fill="rgba(204,204,220,0.2)"/>
<rect x="939" y="1255" width="750" height="1" fill="rgba(204,204,220,0.2)"/>
<rect x="1000" y="1099" width="1" height="157" fill="rgba(204,204,220,0.2)"/>
<rect x="1062" y="1099" width="1" height="157" fill="rgba(204,204,220,0.2)"/>
<rect x="1125" y="1099" width="1" height="157" fill="rgba(204,204,220,0.2)"/>
<rect x="1187" y="1099" width="1" height="157" fill="rgba(204,204,220,0.2)"/>
<rect x="1250" y="1099" width="1" height="157" fill="rgba(204,204,220,0.2)"/>
<rect x="1312" y="1099" width="1" height="157" fill="rgba(204,204,220,0.2)"/>
<rect x="1375" y="1099" width="1" height="157" fill="rgba(204,204,220,0.2)"/>
<rect x="1437" y="1099" width="1" height="157" fill="rgba(204,204,220,0.2)"/>
<rect x="1500" y="1099" width="1" height="157" fill="rgba(204,204,220,0.2)"/>
<rect x="1562" y="1099" width="1" height="157" fill="rgba(204,204,220,0.2)"/>
<rect x="1625" y="1099" width="1" height="157" fill="rgba(204,204,220,0.2)"/>
<rect x="1688" y="1099" width="1" height="157" fill="rgba(204,204,220,0.2)"/>
<rect x="939" y="1202" width="380" height="2" fill="#8ac376"/>
<rect x="1319" y="1202" width="369" height="2" fill="#f6c03b"/>
<rect x="1769" y="1099" width="750" height="1" fill="rgba(204,204,220,0.2)"/>
<rect x="1769" y="1151" width="750" height="1" fill="rgba(204,204,220,0.2)"/>
<rect x="1769" y="1203" width="750" height="1" fill="rgba(204,204,220,0.2)"/>
<rect x="1769" y="1255" width="750" height="1" fill="rgba(204,204,220,0.2)"/>
<rect x="1830" y="1099" width="1" height="157" fill="rgba(204,204,220,0.2)"/>
<rect x="1892" y="1099" width="1" height="157" fill="rgba(204,204,220,0.2)"/>
<rect x="1955" y="1099" width="1" height="157" fill="rgba(204,204,220,0.2)"/>
<rect x="2017" y="1099" width="1" height="157" fill="rgba(204,204,220,0.2)"/>
<rect x="2080" y="1099" width="1" height="157" fill="rgba(204,204,220,0.2)"/>
<rect x="2142" y="1099" width="1" height="157" fill="rgba(204,204,220,0.2)"/>
<rect x="2205" y="1099" width="1" height="157" fill="rgba(204,204,220,0.2)"/>
<rect x="2267" y="1099" width="1" height="157" fill="rgba(204,204,220,0.2)"/>
<rect x="2330" y="1099" width="1" height="157" fill="rgba(204,204,220,0.2)"/>
<rect x="2392" y="1099" width="1" height="157" fill="rgba(204,204,220,0.2)"/>
<rect x="2455" y="1099" width="1" height="157" fill="rgba(204,204,220,0.2)"/>
<rect x="2517" y="1099" width="1" height="157" fill="rgba(204,204,220,0.2)"/>
<rect x="1769" y="1202" width="380" height="2" fill="#8ac376"/>
<rect x="2149" y="1202" width="369" height="2" fill="#f6c03b"/>
<g fill="none" stroke="#ccccdc" stroke-width="1.6"><rect x="66" y="20" width="5.6" height="5.6" rx="0.8"/><rect x="74.4" y="20" width="5.6" height="5.6" rx="0.8"/><rect x="66" y="28.4" width="5.6" height="5.6" rx="0.8"/><rect x="74.4" y="28.4" width="5.6" height="5.6" rx="0.8"/></g>
<path d="M274,20.8 L276.2,25.6 L281.2,26.2 L277.5,29.6 L278.5,34 L274,31.6 L269.5,34 L270.5,29.6 L266.8,26.2 L271.8,25.6 Z" fill="none" stroke="#ccccdc" stroke-width="1.5" stroke-linejoin="round"/>
<g fill="none" stroke="#ccccdc" stroke-width="1.5"><circle cx="312.5" cy="22.5" r="2.6"/><circle cx="303.2" cy="27.2" r="2.6"/><circle cx="312.5" cy="31.8" r="2.6"/><path d="M305.6,26 L310.2,23.6 M305.6,28.4 L310.2,30.7"/></g>
<path d="M284.4,73.2 L287.79999999999995,76.6 L291.2,73.2" fill="none" stroke="#ccccdc" stroke-width="1.4"/>
<path d="M460.8,73.2 L464.2,76.6 L467.6,73.2" fill="none" stroke="#ccccdc" stroke-width="1.4"/>
<path d="M595.6,73.2 L599.0,76.6 L602.4,73.2" fill="none" stroke="#ccccdc" stroke-width="1.4"/>
<path d="M68.6,112.4 L72,115.8 L75.4,112.4" fill="none" stroke="#ccccdc" stroke-width="1.5"/>
<g fill="#9b9ba6"><rect x="2097" y="24" width="3" height="9"/><rect x="2101" y="21.4" width="3.8" height="11.6"/><rect x="2105.8" y="26" width="3" height="7"/><rect x="2110" y="19" width="3" height="14"/></g>
<defs><linearGradient id="og" x1="0" y1="0" x2="0" y2="1"><stop offset="0" stop-color="#ff8a2a"/><stop offset="1" stop-color="#ffc51a"/></linearGradient></defs>
<g fill="url(#og)"><rect x="2115" y="21.6" width="3" height="8.6"/><rect x="2112" y="24.5" width="9.2" height="3"/></g>
<g fill="none" stroke="#9b9ba6" stroke-width="1.6" stroke-linejoin="round"><path d="M2150,20 h8.6 l3.4,3.4 v8.4 a0.9,0.9 0 0 1 -0.9,0.9 h-11.2 a0.9,0.9 0 0 1 -0.9,-0.9 v-10.9 a0.9,0.9 0 0 1 0.9,-0.9 z"/><path d="M2152.8,20 v2.6 h5 v-2.6"/><path d="M2152.4,32.6 v-4.4 h7 v4.4"/></g>
<path d="M2205.27,24.92 L2206.94,25.19 L2206.94,27.01 L2205.27,27.28 L2204.56,28.99 L2205.55,30.37 L2204.27,31.65 L2202.89,30.66 L2201.18,31.37 L2200.91,33.04 L2199.09,33.04 L2198.82,31.37 L2197.11,30.66 L2195.73,31.65 L2194.45,30.37 L2195.44,28.99 L2194.73,27.28 L2193.06,27.01 L2193.06,25.19 L2194.73,24.92 L2195.44,23.21 L2194.45,21.83 L2195.73,20.55 L2197.11,21.54 L2198.82,20.83 L2199.09,19.16 L2200.91,19.16 L2201.18,20.83 L2202.89,21.54 L2204.27,20.55 L2205.55,21.83 L2204.56,23.21 Z" fill="none" stroke="#9b9ba6" stroke-width="1.5" stroke-linejoin="round"/><circle cx="2200" cy="26.1" r="2.2" fill="none" stroke="#9b9ba6" stroke-width="1.5"/>
<g fill="none" stroke="#9b9ba6" stroke-width="1.5"><circle cx="2243.8" cy="26" r="6.8"/><path d="M2243.8,21.8 v4.6 h-2.6"/></g>
<path d="M2348.5,24 L2352.2,27.7 L2355.9,24" fill="none" stroke="#9b9ba6" stroke-width="1.4"/>
<g fill="none" stroke="#9b9ba6" stroke-width="1.5"><circle cx="2384.4" cy="25" r="6.2"/><path d="M2381.4,25 h6 M2389,29.8 l3.8,3.8"/></g>
<g fill="none" stroke="#9b9ba6" stroke-width="1.6"><path d="M2424,23.5 A7,7 0 0 1 2436.6,24.5"/><path d="M2436.4,28.5 A7,7 0 0 1 2423.4,27.5"/></g><g fill="#9b9ba6"><path d="M2422.6,19 L2423,24.4 L2428,23.2 Z"/><path d="M2437.6,33.2 L2437.2,27.8 L2432.2,29 Z"/></g>
<path d="M2479.2,24 L2482.8,27.6 L2486.4,24" fill="none" stroke="#9b9ba6" stroke-width="1.4"/>
<g fill="none" stroke="#9b9ba6" stroke-width="1.6" stroke-linejoin="round"><rect x="2519.6" y="19.2" width="13.6" height="10.6" rx="1.6"/><path d="M2519.6,27 h13.6"/><rect x="2523.6" y="30" width="5.6" height="3" rx="1.2"/></g>
<g fill="none" stroke="#8e8e99" stroke-width="1.7" stroke-linecap="round"><circle cx="22.8" cy="104.8" r="7.2"/><path d="M28,110 L33,115"/></g>
<g fill="none" stroke="#8e8e99" stroke-width="1.7"><path d="M24,146 v16 M16,154 h16"/></g>
<g fill="none" stroke="#d8d9e2" stroke-width="1.9"><rect x="15" y="193" width="7.4" height="7.4"/><rect x="25.6" y="193" width="7.4" height="7.4"/><rect x="15" y="203.6" width="7.4" height="7.4"/><rect x="25.6" y="203.6" width="7.4" height="7.4"/></g>
<g fill="none" stroke="#8e8e99" stroke-width="1.6"><circle cx="24" cy="250" r="9.2"/><path d="M24,241 v1.8 M24,257.2 v1.8 M15,250 h1.8 M31.2,250 h1.8"/></g><path d="M28.2,245.8 L25.6,251.6 L19.8,254.2 L22.4,248.4 Z" fill="none" stroke="#8e8e99" stroke-width="1.4" stroke-linejoin="round"/>
<g fill="none" stroke="#8e8e99" stroke-width="1.6" stroke-linejoin="round"><path d="M18.5,302 v-6 a5.5,5.5 0 0 1 11,0 v6"/><rect x="16.2" y="301.5" width="15.6" height="3.4" rx="1"/><path d="M21.8,305 a2.2,2.2 0 0 0 4.4,0"/><path d="M24,288.4 v2"/></g>
<path d="M31.22,344.39 L33.52,344.76 L33.52,347.24 L31.22,347.61 L30.25,349.96 L31.61,351.85 L29.85,353.61 L27.96,352.25 L25.61,353.22 L25.24,355.52 L22.76,355.52 L22.39,353.22 L20.04,352.25 L18.15,353.61 L16.39,351.85 L17.75,349.96 L16.78,347.61 L14.48,347.24 L14.48,344.76 L16.78,344.39 L17.75,342.04 L16.39,340.15 L18.15,338.39 L20.04,339.75 L22.39,338.78 L22.76,336.48 L25.24,336.48 L25.61,338.78 L27.96,339.75 L29.85,338.39 L31.61,340.15 L30.25,342.04 Z" fill="none" stroke="#8e8e99" stroke-width="1.6" stroke-linejoin="round"/><circle cx="24" cy="346" r="2.9" fill="none" stroke="#8e8e99" stroke-width="1.6"/>
<path d="M16.5,386.5 L24,383.8 L31.5,386.5 V396 C31.5,399.5 28,402 24,403.5 C20,402 16.5,399.5 16.5,396 Z" fill="none" stroke="#8e8e99" stroke-width="1.6" stroke-linejoin="round"/>
<defs><linearGradient id="lg" x1="0" y1="0" x2="0" y2="1"><stop offset="0" stop-color="#f25a29"/><stop offset="0.5" stop-color="#f7871d"/><stop offset="1" stop-color="#fdcc0b"/></linearGradient></defs>
<path d="M25.20,4.60 L27.40,8.40 L32.80,7.60 L33.80,12.60 L37.00,17.40 L34.60,21.20 L36.40,25.20 L32.40,26.80 L29.20,31.80 L25.20,29.60 L17.80,32.00 L16.60,27.40 L11.00,22.40 L14.40,17.40 L14.00,9.20 L19.60,9.80 L22.20,6.80 Z" fill="url(#lg)" stroke="url(#lg)" stroke-width="0.8" stroke-linejoin="round"/>
<circle cx="26.9" cy="19.5" r="8.5" fill="#181b1f"/>
<path d="M35.2,17.5 A8.3,8.3 0 0 1 27.4,27.9 L30,31 L37.5,25.8 Z" fill="url(#lg)"/>
<path d="M25.6,23.9 A4.0,4.0 0 1 1 30.2,22.6" fill="none" stroke="url(#lg)" stroke-width="2.5"/>
<circle cx="24" cy="1232" r="9" fill="#5a7d1a"/>
</svg>
<div class="t" style="left:182.0px;width:1000px;text-align:center;top:146.15px;font-size:14px;line-height:14px;color:#ccccdc;font-weight:normal;-webkit-text-stroke:0.3px #ccccdc;">znode_count</div>
<div class="t" style="left:1425.5px;width:1000px;text-align:center;top:146.15px;font-size:14px;line-height:14px;color:#ccccdc;font-weight:normal;-webkit-text-stroke:0.3px #ccccdc;">znode_count_rate</div>
<div class="t" style="left:182.0px;width:1000px;text-align:center;top:450.15px;font-size:14px;line-height:14px;color:#ccccdc;font-weight:normal;-webkit-text-stroke:0.3px #ccccdc;">global_sessions</div>
<div class="t" style="left:1425.5px;width:1000px;text-align:center;top:450.15px;font-size:14px;line-height:14px;color:#ccccdc;font-weight:normal;-webkit-text-stroke:0.3px #ccccdc;">local_sessions</div>
<div class="t" style="left:182.0px;width:1000px;text-align:center;top:754.15px;font-size:14px;line-height:14px;color:#ccccdc;font-weight:normal;-webkit-text-stroke:0.3px #ccccdc;">write_per_namespace</div>
<div class="t" style="left:1425.5px;width:1000px;text-align:center;top:754.15px;font-size:14px;line-height:14px;color:#ccccdc;font-weight:normal;-webkit-text-stroke:0.3px #ccccdc;">read_per_namespace</div>
<div class="t" style="left:-25.5px;width:1000px;text-align:center;top:1058.15px;font-size:14px;line-height:14px;color:#ccccdc;font-weight:normal;-webkit-text-stroke:0.3px #ccccdc;">approximate_data_size</div>
<div class="t" style="left:803.5px;width:1000px;text-align:center;top:1058.15px;font-size:14px;line-height:14px;color:#ccccdc;font-weight:normal;-webkit-text-stroke:0.3px #ccccdc;">packets_received</div>
<div class="t" style="left:1633.0px;width:1000px;text-align:center;top:1058.15px;font-size:14px;line-height:14px;color:#ccccdc;font-weight:normal;-webkit-text-stroke:0.3px #ccccdc;">packets_sent</div>
<div class="t" style="right:2462px;text-align:right;top:180.34px;font-size:12px;line-height:12px;color:#ccccdc;font-weight:normal;-webkit-text-stroke:0.25px #ccccdc;">8</div>
<div class="t" style="right:2462px;text-align:right;top:232.34px;font-size:12px;line-height:12px;color:#ccccdc;font-weight:normal;-webkit-text-stroke:0.25px #ccccdc;">6</div>
<div class="t" style="right:2462px;text-align:right;top:284.34px;font-size:12px;line-height:12px;color:#ccccdc;font-weight:normal;-webkit-text-stroke:0.25px #ccccdc;">4</div>
<div class="t" style="right:2462px;text-align:right;top:336.34px;font-size:12px;line-height:12px;color:#ccccdc;font-weight:normal;-webkit-text-stroke:0.25px #ccccdc;">2</div>
<div class="t" style="right:2462px;text-align:right;top:388.34px;font-size:12px;line-height:12px;color:#ccccdc;font-weight:normal;-webkit-text-stroke:0.25px #ccccdc;">0</div>
<div class="t" style="left:-314.5px;width:1000px;text-align:center;top:402.84px;font-size:12px;line-height:12px;color:#ccccdc;font-weight:normal;-webkit-text-stroke:0.25px #ccccdc;">14:45</div>
<div class="t" style="left:-215.5px;width:1000px;text-align:center;top:402.84px;font-size:12px;line-height:12px;color:#ccccdc;font-weight:normal;-webkit-text-stroke:0.25px #ccccdc;">14:50</div>
<div class="t" style="left:-116.5px;width:1000px;text-align:center;top:402.84px;font-size:12px;line-height:12px;color:#ccccdc;font-weight:normal;-webkit-text-stroke:0.25px #ccccdc;">14:55</div>
<div class="t" style="left:-17.5px;width:1000px;text-align:center;top:402.84px;font-size:12px;line-height:12px;color:#ccccdc;font-weight:normal;-webkit-text-stroke:0.25px #ccccdc;">15:00</div>
<div class="t" style="left:81.5px;width:1000px;text-align:center;top:402.84px;font-size:12px;line-height:12px;color:#ccccdc;font-weight:normal;-webkit-text-stroke:0.25px #ccccdc;">15:05</div>
<div class="t" style="left:179.5px;width:1000px;text-align:center;top:402.84px;font-size:12px;line-height:12px;color:#ccccdc;font-weight:normal;-webkit-text-stroke:0.25px #ccccdc;">15:10</div>
<div class="t" style="left:278.5px;width:1000px;text-align:center;top:402.84px;font-size:12px;line-height:12px;color:#ccccdc;font-weight:normal;-webkit-text-stroke:0.25px #ccccdc;">15:15</div>
<div class="t" style="left:377.5px;width:1000px;text-align:center;top:402.84px;font-size:12px;line-height:12px;color:#ccccdc;font-weight:normal;-webkit-text-stroke:0.25px #ccccdc;">15:20</div>
<div class="t" style="left:476.5px;width:1000px;text-align:center;top:402.84px;font-size:12px;line-height:12px;color:#ccccdc;font-weight:normal;-webkit-text-stroke:0.25px #ccccdc;">15:25</div>
<div class="t" style="left:575.5px;width:1000px;text-align:center;top:402.84px;font-size:12px;line-height:12px;color:#ccccdc;font-weight:normal;-webkit-text-stroke:0.25px #ccccdc;">15:30</div>
<div class="t" style="left:674.5px;width:1000px;text-align:center;top:402.84px;font-size:12px;line-height:12px;color:#ccccdc;font-weight:normal;-webkit-text-stroke:0.25px #ccccdc;">15:35</div>
<div class="t" style="left:773.5px;width:1000px;text-align:center;top:402.84px;font-size:12px;line-height:12px;color:#ccccdc;font-weight:normal;-webkit-text-stroke:0.25px #ccccdc;">15:40</div>
<div class="t" style="right:1161px;text-align:right;top:180.34px;font-size:12px;line-height:12px;color:#ccccdc;font-weight:normal;-webkit-text-stroke:0.25px #ccccdc;">1 ops/s</div>
<div class="t" style="right:1161px;text-align:right;top:232.34px;font-size:12px;line-height:12px;color:#ccccdc;font-weight:normal;-webkit-text-stroke:0.25px #ccccdc;">0.500 ops/s</div>
<div class="t" style="right:1161px;text-align:right;top:284.34px;font-size:12px;line-height:12px;color:#ccccdc;font-weight:normal;-webkit-text-stroke:0.25px #ccccdc;">0 ops/s</div>
<div class="t" style="right:1161px;text-align:right;top:336.34px;font-size:12px;line-height:12px;color:#ccccdc;font-weight:normal;-webkit-text-stroke:0.25px #ccccdc;">-0.50 ops/s</div>
<div class="t" style="right:1161px;text-align:right;top:388.34px;font-size:12px;line-height:12px;color:#ccccdc;font-weight:normal;-webkit-text-stroke:0.25px #ccccdc;">-1 ops/s</div>
<div class="t" style="left:979.5px;width:1000px;text-align:center;top:402.84px;font-size:12px;line-height:12px;color:#ccccdc;font-weight:normal;-webkit-text-stroke:0.25px #ccccdc;">14:45</div>
<div class="t" style="left:1073.5px;width:1000px;text-align:center;top:402.84px;font-size:12px;line-height:12px;color:#ccccdc;font-weight:normal;-webkit-text-stroke:0.25px #ccccdc;">14:50</div>
<div class="t" style="left:1168.5px;width:1000px;text-align:center;top:402.84px;font-size:12px;line-height:12px;color:#ccccdc;font-weight:normal;-webkit-text-stroke:0.25px #ccccdc;">14:55</div>
<div class="t" style="left:1262.5px;width:1000px;text-align:center;top:402.84px;font-size:12px;line-height:12px;color:#ccccdc;font-weight:normal;-webkit-text-stroke:0.25px #ccccdc;">15:00</div>
<div class="t" style="left:1356.5px;width:1000px;text-align:center;top:402.84px;font-size:12px;line-height:12px;color:#ccccdc;font-weight:normal;-webkit-text-stroke:0.25px #ccccdc;">15:05</div>
<div class="t" style="left:1451.5px;width:1000px;text-align:center;top:402.84px;font-size:12px;line-height:12px;color:#ccccdc;font-weight:normal;-webkit-text-stroke:0.25px #ccccdc;">15:10</div>
<div class="t" style="left:1545.5px;width:1000px;text-align:center;top:402.84px;font-size:12px;line-height:12px;color:#ccccdc;font-weight:normal;-webkit-text-stroke:0.25px #ccccdc;">15:15</div>
<div class="t" style="left:1640.5px;width:1000px;text-align:center;top:402.84px;font-size:12px;line-height:12px;color:#ccccdc;font-weight:normal;-webkit-text-stroke:0.25px #ccccdc;">15:20</div>
<div class="t" style="left:1734.5px;width:1000px;text-align:center;top:402.84px;font-size:12px;line-height:12px;color:#ccccdc;font-weight:normal;-webkit-text-stroke:0.25px #ccccdc;">15:25</div>
<div class="t" style="left:1828.5px;width:1000px;text-align:center;top:402.84px;font-size:12px;line-height:12px;color:#ccccdc;font-weight:normal;-webkit-text-stroke:0.25px #ccccdc;">15:30</div>
<div class="t" style="left:1923.5px;width:1000px;text-align:center;top:402.84px;font-size:12px;line-height:12px;color:#ccccdc;font-weight:normal;-webkit-text-stroke:0.25px #ccccdc;">15:35</div>
<div class="t" style="left:2017.5px;width:1000px;text-align:center;top:402.84px;font-size:12px;line-height:12px;color:#ccccdc;font-weight:normal;-webkit-text-stroke:0.25px #ccccdc;">15:40</div>
<div class="t" style="right:2428.5px;text-align:right;top:788.34px;font-size:12px;line-height:12px;color:#ccccdc;font-weight:normal;-webkit-text-stroke:0.25px #ccccdc;">1 B</div>
<div class="t" style="right:2428.5px;text-align:right;top:840.34px;font-size:12px;line-height:12px;color:#ccccdc;font-weight:normal;-webkit-text-stroke:0.25px #ccccdc;">0.500 B</div>
<div class="t" style="right:2428.5px;text-align:right;top:892.34px;font-size:12px;line-height:12px;color:#ccccdc;font-weight:normal;-webkit-text-stroke:0.25px #ccccdc;">0 B</div>
<div class="t" style="right:2428.5px;text-align:right;top:944.34px;font-size:12px;line-height:12px;color:#ccccdc;font-weight:normal;-webkit-text-stroke:0.25px #ccccdc;">-0.50 B</div>
<div class="t" style="right:2428.5px;text-align:right;top:996.34px;font-size:12px;line-height:12px;color:#ccccdc;font-weight:normal;-webkit-text-stroke:0.25px #ccccdc;">-1 B</div>
<div class="t" style="left:-285.5px;width:1000px;text-align:center;top:1010.84px;font-size:12px;line-height:12px;color:#ccccdc;font-weight:normal;-webkit-text-stroke:0.25px #ccccdc;">14:45</div>
<div class="t" style="left:-189.5px;width:1000px;text-align:center;top:1010.84px;font-size:12px;line-height:12px;color:#ccccdc;font-weight:normal;-webkit-text-stroke:0.25px #ccccdc;">14:50</div>
<div class="t" style="left:-92.5px;width:1000px;text-align:center;top:1010.84px;font-size:12px;line-height:12px;color:#ccccdc;font-weight:normal;-webkit-text-stroke:0.25px #ccccdc;">14:55</div>
<div class="t" style="left:3.5px;width:1000px;text-align:center;top:1010.84px;font-size:12px;line-height:12px;color:#ccccdc;font-weight:normal;-webkit-text-stroke:0.25px #ccccdc;">15:00</div>
<div class="t" style="left:99.5px;width:1000px;text-align:center;top:1010.84px;font-size:12px;line-height:12px;color:#ccccdc;font-weight:normal;-webkit-text-stroke:0.25px #ccccdc;">15:05</div>
<div class="t" style="left:195.5px;width:1000px;text-align:center;top:1010.84px;font-size:12px;line-height:12px;color:#ccccdc;font-weight:normal;-webkit-text-stroke:0.25px #ccccdc;">15:10</div>
<div class="t" style="left:292.5px;width:1000px;text-align:center;top:1010.84px;font-size:12px;line-height:12px;color:#ccccdc;font-weight:normal;-webkit-text-stroke:0.25px #ccccdc;">15:15</div>
<div class="t" style="left:388.5px;width:1000px;text-align:center;top:1010.84px;font-size:12px;line-height:12px;color:#ccccdc;font-weight:normal;-webkit-text-stroke:0.25px #ccccdc;">15:20</div>
<div class="t" style="left:484.5px;width:1000px;text-align:center;top:1010.84px;font-size:12px;line-height:12px;color:#ccccdc;font-weight:normal;-webkit-text-stroke:0.25px #ccccdc;">15:25</div>
<div class="t" style="left:580.5px;width:1000px;text-align:center;top:1010.84px;font-size:12px;line-height:12px;color:#ccccdc;font-weight:normal;-webkit-text-stroke:0.25px #ccccdc;">15:30</div>
<div class="t" style="left:677.5px;width:1000px;text-align:center;top:1010.84px;font-size:12px;line-height:12px;color:#ccccdc;font-weight:normal;-webkit-text-stroke:0.25px #ccccdc;">15:35</div>
<div class="t" style="left:773.5px;width:1000px;text-align:center;top:1010.84px;font-size:12px;line-height:12px;color:#ccccdc;font-weight:normal;-webkit-text-stroke:0.25px #ccccdc;">15:40</div>
<div class="t" style="left:182px;width:1000px;text-align:center;top:869.65px;font-size:14px;line-height:14px;color:#ccccdc;font-weight:normal;">No data</div>
<div class="t" style="right:1184.5px;text-align:right;top:788.34px;font-size:12px;line-height:12px;color:#ccccdc;font-weight:normal;-webkit-text-stroke:0.25px #ccccdc;">1 B</div>
<div class="t" style="right:1184.5px;text-align:right;top:840.34px;font-size:12px;line-height:12px;color:#ccccdc;font-weight:normal;-webkit-text-stroke:0.25px #ccccdc;">0.500 B</div>
<div class="t" style="right:1184.5px;text-align:right;top:892.34px;font-size:12px;line-height:12px;color:#ccccdc;font-weight:normal;-webkit-text-stroke:0.25px #ccccdc;">0 B</div>
<div class="t" style="right:1184.5px;text-align:right;top:944.34px;font-size:12px;line-height:12px;color:#ccccdc;font-weight:normal;-webkit-text-stroke:0.25px #ccccdc;">-0.50 B</div>
<div class="t" style="right:1184.5px;text-align:right;top:996.34px;font-size:12px;line-height:12px;color:#ccccdc;font-weight:normal;-webkit-text-stroke:0.25px #ccccdc;">-1 B</div>
<div class="t" style="left:958.5px;width:1000px;text-align:center;top:1010.84px;font-size:12px;line-height:12px;color:#ccccdc;font-weight:normal;-webkit-text-stroke:0.25px #ccccdc;">14:45</div>
<div class="t" style="left:1054.5px;width:1000px;text-align:center;top:1010.84px;font-size:12px;line-height:12px;color:#ccccdc;font-weight:normal;-webkit-text-stroke:0.25px #ccccdc;">14:50</div>
<div class="t" style="left:1151.5px;width:1000px;text-align:center;top:1010.84px;font-size:12px;line-height:12px;color:#ccccdc;font-weight:normal;-webkit-text-stroke:0.25px #ccccdc;">14:55</div>
<div class="t" style="left:1247.5px;width:1000px;text-align:center;top:1010.84px;font-size:12px;line-height:12px;color:#ccccdc;font-weight:normal;-webkit-text-stroke:0.25px #ccccdc;">15:00</div>
<div class="t" style="left:1343.5px;width:1000px;text-align:center;top:1010.84px;font-size:12px;line-height:12px;color:#ccccdc;font-weight:normal;-webkit-text-stroke:0.25px #ccccdc;">15:05</div>
<div class="t" style="left:1440.5px;width:1000px;text-align:center;top:1010.84px;font-size:12px;line-height:12px;color:#ccccdc;font-weight:normal;-webkit-text-stroke:0.25px #ccccdc;">15:10</div>
<div class="t" style="left:1536.5px;width:1000px;text-align:center;top:1010.84px;font-size:12px;line-height:12px;color:#ccccdc;font-weight:normal;-webkit-text-stroke:0.25px #ccccdc;">15:15</div>
<div class="t" style="left:1632.5px;width:1000px;text-align:center;top:1010.84px;font-size:12px;line-height:12px;color:#ccccdc;font-weight:normal;-webkit-text-stroke:0.25px #ccccdc;">15:20</div>
<div class="t" style="left:1728.5px;width:1000px;text-align:center;top:1010.84px;font-size:12px;line-height:12px;color:#ccccdc;font-weight:normal;-webkit-text-stroke:0.25px #ccccdc;">15:25</div>
<div class="t" style="left:1825.5px;width:1000px;text-align:center;top:1010.84px;font-size:12px;line-height:12px;color:#ccccdc;font-weight:normal;-webkit-text-stroke:0.25px #ccccdc;">15:30</div>
<div class="t" style="left:1921.5px;width:1000px;text-align:center;top:1010.84px;font-size:12px;line-height:12px;color:#ccccdc;font-weight:normal;-webkit-text-stroke:0.25px #ccccdc;">15:35</div>
<div class="t" style="left:2017.5px;width:1000px;text-align:center;top:1010.84px;font-size:12px;line-height:12px;color:#ccccdc;font-weight:normal;-webkit-text-stroke:0.25px #ccccdc;">15:40</div>
<div class="t" style="left:1426px;width:1000px;text-align:center;top:869.65px;font-size:14px;line-height:14px;color:#ccccdc;font-weight:normal;">No data</div>
<div class="t" style="right:2445px;text-align:right;top:1092.34px;font-size:12px;line-height:12px;color:#ccccdc;font-weight:normal;-webkit-text-stroke:0.25px #ccccdc;">50 B</div>
<div class="t" style="right:2445px;text-align:right;top:1144.34px;font-size:12px;line-height:12px;color:#ccccdc;font-weight:normal;-webkit-text-stroke:0.25px #ccccdc;">48 B</div>
<div class="t" style="right:2445px;text-align:right;top:1196.34px;font-size:12px;line-height:12px;color:#ccccdc;font-weight:normal;-webkit-text-stroke:0.25px #ccccdc;">46 B</div>
<div class="t" style="right:2445px;text-align:right;top:1248.34px;font-size:12px;line-height:12px;color:#ccccdc;font-weight:normal;-webkit-text-stroke:0.25px #ccccdc;">44 B</div>
<div class="t" style="right:1610px;text-align:right;top:1092.34px;font-size:12px;line-height:12px;color:#ccccdc;font-weight:normal;-webkit-text-stroke:0.25px #ccccdc;">1</div>
<div class="t" style="right:1610px;text-align:right;top:1144.34px;font-size:12px;line-height:12px;color:#ccccdc;font-weight:normal;-webkit-text-stroke:0.25px #ccccdc;">0.500</div>
<div class="t" style="right:1610px;text-align:right;top:1196.34px;font-size:12px;line-height:12px;color:#ccccdc;font-weight:normal;-webkit-text-stroke:0.25px #ccccdc;">0</div>
<div class="t" style="right:1610px;text-align:right;top:1248.34px;font-size:12px;line-height:12px;color:#ccccdc;font-weight:normal;-webkit-text-stroke:0.25px #ccccdc;">-0.500</div>
<div class="t" style="right:780.5px;text-align:right;top:1092.34px;font-size:12px;line-height:12px;color:#ccccdc;font-weight:normal;-webkit-text-stroke:0.25px #ccccdc;">1</div>
<div class="t" style="right:780.5px;text-align:right;top:1144.34px;font-size:12px;line-height:12px;color:#ccccdc;font-weight:normal;-webkit-text-stroke:0.25px #ccccdc;">0.500</div>
<div class="t" style="right:780.5px;text-align:right;top:1196.34px;font-size:12px;line-height:12px;color:#ccccdc;font-weight:normal;-webkit-text-stroke:0.25px #ccccdc;">0</div>
<div class="t" style="right:780.5px;text-align:right;top:1248.34px;font-size:12px;line-height:12px;color:#ccccdc;font-weight:normal;-webkit-text-stroke:0.25px #ccccdc;">-0.500</div>
<div class="t" style="left:73px;top:488.52px;font-size:34px;line-height:34px;color:#ccccdc;font-weight:normal;letter-spacing:-0.15px;">10.159.70.132:7000</div>
<div class="t" style="left:760.5px;width:1000px;text-align:center;top:532.36px;font-size:74px;line-height:74px;color:#73bf69;font-weight:normal;">0</div>
<div class="t" style="left:73px;top:612.52px;font-size:34px;line-height:34px;color:#ccccdc;font-weight:normal;letter-spacing:-0.15px;">10.159.70.134:7000</div>
<div class="t" style="left:760.5px;width:1000px;text-align:center;top:656.36px;font-size:74px;line-height:74px;color:#73bf69;font-weight:normal;">0</div>
<div class="t" style="left:1317px;top:488.52px;font-size:34px;line-height:34px;color:#ccccdc;font-weight:normal;letter-spacing:-0.15px;">10.159.70.132:7000</div>
<div class="t" style="left:2004.5px;width:1000px;text-align:center;top:532.36px;font-size:74px;line-height:74px;color:#73bf69;font-weight:normal;">0</div>
<div class="t" style="left:1317px;top:612.52px;font-size:34px;line-height:34px;color:#ccccdc;font-weight:normal;letter-spacing:-0.15px;">10.159.70.134:7000</div>
<div class="t" style="left:2004.5px;width:1000px;text-align:center;top:656.36px;font-size:74px;line-height:74px;color:#73bf69;font-weight:normal;">0</div>
<div class="t" style="left:90px;top:17.76px;font-size:18px;line-height:18px;color:#ccccdc;font-weight:normal;letter-spacing:-0.4px;">General</div>
<div class="t" style="left:160px;top:17.76px;font-size:18px;line-height:18px;color:#ccccdc;font-weight:normal;">/</div>
<div class="t" style="left:172px;top:17.76px;font-size:18px;line-height:18px;color:#ccccdc;font-weight:normal;letter-spacing:-0.55px;">ZooKeeper</div>
<div class="t" style="left:73px;top:69.14px;font-size:12px;line-height:12px;color:#6e9fff;font-weight:bold;letter-spacing:-0.12px;">Datasource</div>
<div class="t" style="left:158px;top:67.65px;font-size:14px;line-height:14px;color:#ccccdc;font-weight:normal;letter-spacing:0.3px;">PrometheusTest02</div>
<div class="t" style="left:327.5px;top:69.14px;font-size:12px;line-height:12px;color:#6e9fff;font-weight:bold;letter-spacing:-0.12px;">Cluster</div>
<div class="t" style="left:389px;top:67.65px;font-size:14px;line-height:14px;color:#ccccdc;font-weight:normal;letter-spacing:0.15px;">zookeeper</div>
<div class="t" style="left:504px;top:69.14px;font-size:12px;line-height:12px;color:#6e9fff;font-weight:bold;letter-spacing:-0.12px;">Instance</div>
<div class="t" style="left:573.5px;top:67.65px;font-size:14px;line-height:14px;color:#ccccdc;font-weight:normal;letter-spacing:0.1px;">All</div>
<div class="t" style="left:80.5px;top:105.23px;font-size:16.5px;line-height:16.5px;color:#ccccdc;font-weight:bold;letter-spacing:-0.95px;">Overall</div>
<div class="t" style="left:2262px;top:19.35px;font-size:14px;line-height:14px;color:#ccccdc;font-weight:normal;letter-spacing:0.15px;">Last 1 hour</div>
<div class="t" style="left:2455.5px;top:19.05px;font-size:14px;line-height:14px;color:#ccccdc;font-weight:normal;">5s</div>
</body></html>
